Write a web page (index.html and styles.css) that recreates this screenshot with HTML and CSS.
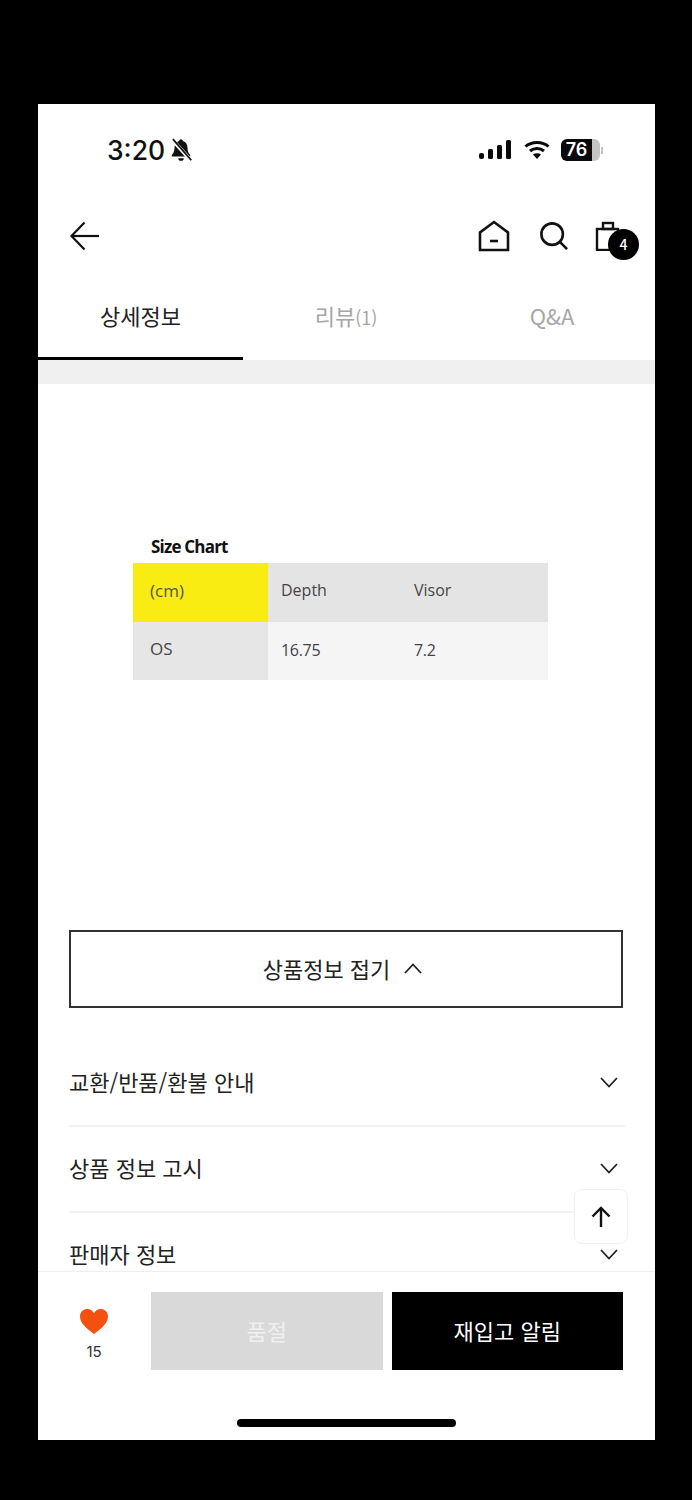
FILE: index.html
```html
<!DOCTYPE html>
<html lang="ko">
<head>
  <meta charset="utf-8">
  <title>상세정보</title>
  <link rel="stylesheet" href="styles.css">
</head>
<body>
  <div class="screen">
    <div class="status-bar">
      <div class="status-left">
        <span class="time">3:20</span>
        <svg class="bell" width="24" height="26" viewBox="0 0 22 24">
          <path d="M11 2c1 0 1.600.7 1.700 1.600 3 .8 4.300 3.400 4.300 6.400 0 3 .8 5 2.500 6.500V18H2.500v-1.500C4.200 15 5 13 5 10c0-3 1.300-5.600 4.300-6.400C9.400 2.700 10 2 11 2z" fill="#111"/>
          <path d="M8.500 19.500h5a2.500 2.500 0 0 1-5 0z" fill="#111"/>
          <path d="M3 2.500l17 19" stroke="#fff" stroke-width="3.500"/>
          <path d="M3.500 2l17 19.500" stroke="#111" stroke-width="1.600"/>
        </svg>
      </div>
      <div class="status-right">
        <svg class="signal" width="32" height="20" viewBox="0 0 32 20" fill="#0a0a0a">
          <rect x="0" y="13" width="5" height="6" rx="2"/>
          <rect x="9" y="9" width="5" height="10" rx="1.500"/>
          <rect x="18" y="5" width="5" height="14" rx="1.500"/>
          <rect x="27" y="0" width="5" height="19" rx="1.500"/>
        </svg>
        <svg width="26" height="20" viewBox="0 0 26 20" fill="none" stroke="#0a0a0a" stroke-width="3">
          <path d="M1.500 6.500C7.500 1 18.500 1 24.500 6.500"/>
          <path d="M6 11c4-3.500 10-3.500 14 0"/>
          <path d="M13 19l-4-4.500c2.300-1.700 5.700-1.700 8 0z" fill="#0a0a0a" stroke="none"/>
        </svg>
        <div class="battery">
          <div class="battery-fill">76</div>
          <div class="battery-rest"></div>
          <div class="battery-cap"></div>
        </div>
      </div>
    </div>

    <header class="top-nav">
      <svg width="32" height="32" viewBox="0 0 32 32" fill="none" stroke="#111" stroke-width="2.200">
        <path d="M3 16h27"/>
        <path d="M15.500 2.500L2.500 16l13 13.500"/>
      </svg>
      <div class="nav-icons">
        <svg class="home-icon" width="32" height="32" viewBox="0 0 32 32" fill="none" stroke="#111" stroke-width="2.600">
          <path d="M2 30V12.500L16 2l14 10.500V30z"/>
          <path d="M12 21h8"/>
        </svg>
        <svg width="28" height="28" viewBox="0 0 30 30" fill="none" stroke="#111" stroke-width="2.800">
          <circle cx="13" cy="13" r="11.500"/>
          <path d="M21.500 21.500l7.500 7.500"/>
        </svg>
        <div class="cart">
          <svg width="26" height="30" viewBox="0 0 26 30" fill="none" stroke="#111" stroke-width="2.400">
            <rect x="2" y="8" width="21" height="21"/>
            <rect x="8" y="2" width="10" height="6"/>
          </svg>
          <span class="cart-badge">4</span>
        </div>
      </div>
    </header>

    <nav class="tabs">
      <div class="tab active">상세정보</div>
      <div class="tab">리뷰<span class="tab-count">(1)</span></div>
      <div class="tab">Q&amp;A</div>
    </nav>
    <div class="tab-band"></div>

    <main class="detail">
      <section class="size-chart">
        <h3>Size Chart</h3>
        <div class="chart-grid">
          <div class="cell unit">(cm)</div>
          <div class="cell head">Depth</div>
          <div class="cell head">Visor</div>
          <div class="cell label">OS</div>
          <div class="cell value">16.75</div>
          <div class="cell value">7.2</div>
        </div>
      </section>

      <button class="fold-btn">
        상품정보 접기
        <svg width="20" height="12" viewBox="0 0 20 12" fill="none" stroke="#222" stroke-width="1.800"><path d="M2 11l8-8.500 8 8.500"/></svg>
      </button>

      <div class="accordion">
        <div class="acc-row">
          <span>교환/반품/환불 안내</span>
          <svg width="20" height="12" viewBox="0 0 20 12" fill="none" stroke="#222" stroke-width="1.800"><path d="M2 2l8 8.500 8-8.500"/></svg>
        </div>
        <div class="acc-row">
          <span>상품 정보 고시</span>
          <svg width="20" height="12" viewBox="0 0 20 12" fill="none" stroke="#222" stroke-width="1.800"><path d="M2 2l8 8.500 8-8.500"/></svg>
        </div>
        <div class="acc-row">
          <span>판매자 정보</span>
          <svg width="20" height="12" viewBox="0 0 20 12" fill="none" stroke="#222" stroke-width="1.800"><path d="M2 2l8 8.500 8-8.500"/></svg>
        </div>
      </div>
    </main>

    <div class="to-top">
      <svg width="22" height="22" viewBox="0 0 22 22" fill="none" stroke="#111" stroke-width="2.400">
        <path d="M11 21V2"/>
        <path d="M2.500 10.500L11 2l8.500 8.500"/>
      </svg>
    </div>

    <footer class="buy-bar">
      <div class="buy-row">
        <div class="like">
          <svg width="30" height="27" viewBox="0 0 30 27">
            <path d="M15 26C8 20.500 1 15.500 1 8.500 1 4 4.300 1 8 1c3 0 5.600 1.500 7 4.200C16.400 2.500 19 1 22 1c3.700 0 7 3 7 7.500C29 15.500 22 20.500 15 26z" fill="#f4500f"/>
          </svg>
          <span>15</span>
        </div>
        <button class="btn soldout">품절</button>
        <button class="btn restock">재입고 알림</button>
      </div>
      <div class="home-indicator"></div>
    </footer>
  </div>
</body>
</html>
```

FILE: styles.css
```css
body {
  margin: 0;
  background-color: #000;
  font-family: "Noto Sans CJK KR", "Noto Sans", sans-serif;
  color: #222;
}

.screen {
  position: relative;
  display: flex;
  flex-direction: column;
  width: 617px;
  height: 1336px;
  margin: 104px 0 60px 38px;
  background-color: #fff;
  overflow: hidden;
}

/* status bar */
.status-bar {
  display: flex;
  justify-content: space-between;
  align-items: center;
  height: 92px;
  padding-left: 69px;
  padding-right: 52px;
}

.status-left {
  display: flex;
  align-items: center;
  gap: 4px;
}

.time {
  font-family: Inter, sans-serif;
  font-size: 26.5px;
  font-weight: 500;
  color: #111;
}

.status-right {
  display: flex;
  align-items: center;
  gap: 11px;
}

.signal {
  margin-right: 2px;
}

.battery {
  display: flex;
  align-items: center;
  width: 42px;
  height: 22px;
}

.battery-fill {
  width: 31px;
  height: 22px;
  background-color: #0a0a0a;
  border-radius: 6px 0 0 6px;
  color: #fff;
  font-family: Inter, sans-serif;
  font-size: 18px;
  font-weight: 600;
  line-height: 22px;
  text-align: center;
}

.battery-rest {
  width: 8px;
  height: 22px;
  background-color: #c4c4c4;
  border-radius: 0 6px 6px 0;
}

.battery-cap {
  width: 2px;
  height: 7px;
  margin-left: 1px;
  background-color: #c4c4c4;
}

/* top nav */
.top-nav {
  display: flex;
  justify-content: space-between;
  align-items: center;
  height: 80px;
  padding-left: 31px;
  padding-right: 16px;
}

.nav-icons {
  display: flex;
  align-items: center;
  gap: 27px;
}

.home-icon {
  margin-right: 3px;
}

.cart {
  position: relative;
  width: 44px;
  height: 30px;
}

.cart-badge {
  position: absolute;
  left: 13px;
  top: 8px;
  width: 31px;
  height: 31px;
  border-radius: 50%;
  background-color: #000;
  color: #fff;
  font-size: 14px;
  font-weight: 500;
  line-height: 31px;
  text-align: center;
}

/* tabs */
.tabs {
  display: grid;
  grid-template-columns: 205px 206px 206px;
  height: 84px;
}

.tab {
  padding-top: 23px;
  box-sizing: border-box;
  font-size: 22px;
  line-height: 32px;
  text-align: center;
  color: #a6a6a6;
}

.tab.active {
  border-bottom: 3px solid #000;
  color: #222;
}

.tab-count {
  font-size: 18px;
}

.tab-band {
  height: 24px;
  background-color: #f0f0f0;
}

/* size chart */
.detail {
  flex: 1;
  min-height: 0;
}

.size-chart {
  height: 546px;
  padding-top: 151px;
  padding-left: 95px;
  box-sizing: border-box;
}

.size-chart h3 {
  margin: 0 0 4px 18px;
  font-family: "Open Sans", sans-serif;
  font-size: 17px;
  font-weight: 700;
  line-height: 24px;
  letter-spacing: -0.8px;
  color: #111;
}

.chart-grid {
  display: grid;
  grid-template-columns: 135px 133px 147px;
  grid-template-rows: 59px 58px;
  width: 415px;
}

.cell {
  display: flex;
  align-items: center;
  padding-left: 13px;
  padding-bottom: 5px;
  font-family: "Open Sans", sans-serif;
  font-size: 16px;
  color: #444;
}

.unit {
  padding-left: 17px;
  background-color: #f8ec12;
  font-size: 17px;
  color: #555;
}

.head {
  background-color: #e4e4e5;
}

.label {
  padding-left: 17px;
  background-color: #e6e6e7;
  font-size: 17px;
}

.value {
  padding-bottom: 3px;
  background-color: #f6f5f5;
  letter-spacing: -0.3px;
}

/* fold button and accordion */
.fold-btn {
  display: flex;
  justify-content: center;
  align-items: center;
  gap: 13px;
  width: 554px;
  height: 78px;
  margin-left: 31px;
  padding: 0 6px 3px 0;
  background-color: #fff;
  border: 2px solid #333;
  font-family: inherit;
  font-size: 22px;
  color: #222;
}

.accordion {
  margin-top: 33px;
  padding-left: 31px;
  padding-right: 30px;
}

.acc-row {
  display: flex;
  justify-content: space-between;
  align-items: center;
  height: 84px;
  padding-right: 6px;
  border-bottom: 2px solid #f2f2f2;
  font-size: 22px;
}

.acc-row span {
  margin-bottom: 4px;
}

.acc-row svg {
  margin-bottom: 2px;
}

.acc-row:last-child {
  border-bottom: none;
}

/* scroll to top */
.to-top {
  position: absolute;
  left: 536px;
  top: 1085px;
  display: flex;
  justify-content: center;
  align-items: center;
  width: 54px;
  height: 55px;
  background-color: #fff;
  border: 1px solid #f0f0f0;
  border-radius: 8px;
  box-sizing: border-box;
}

/* bottom bar */
.buy-bar {
  position: absolute;
  left: 0;
  right: 0;
  bottom: 0;
  height: 169px;
  background-color: #fff;
  border-top: 1px solid #eee;
  box-sizing: border-box;
}

.buy-row {
  display: flex;
  gap: 9px;
  height: 78px;
  margin-top: 20px;
  padding-left: 31px;
  padding-right: 32px;
}

.like {
  display: flex;
  flex-direction: column;
  align-items: center;
  gap: 7px;
  width: 50px;
  margin-right: 23px;
  padding-top: 16px;
  box-sizing: border-box;
  font-family: Inter, sans-serif;
  font-size: 15px;
  line-height: 20px;
  color: #333;
}

.btn {
  flex: 1;
  padding: 0 0 3px;
  border: none;
  font-family: inherit;
  font-size: 22px;
  color: #fff;
}

.soldout {
  background-color: #d9d9d9;
  color: #f0f0f0;
}

.restock {
  background-color: #000;
}

.home-indicator {
  width: 219px;
  height: 8px;
  margin: 49px 0 0 199px;
  background-color: #000;
  border-radius: 4px;
}
```
